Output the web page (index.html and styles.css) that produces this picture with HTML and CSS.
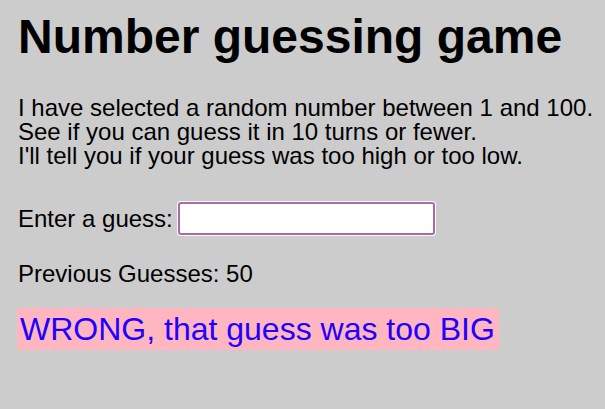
FILE: index.html
```html
<!DOCTYPE html>
<html lang="en">
<head>
<meta charset="utf-8">
<title>Number guessing game</title>
<link rel="stylesheet" href="styles.css">
</head>
<body>
<h1 class="title">Number guessing game</h1>
<p class="intro">I have selected a random number between 1 and 100.<br>See if you can guess it in 10 turns or fewer.<br>I'll tell you if your guess was too high or too low.</p>
<div class="form-row">
  <label class="label" for="guessField">Enter a guess:</label>
  <input class="guess-field" type="text" id="guessField">
</div>
<p class="guesses">Previous Guesses: 50</p>
<p class="last-result">WRONG, that guess was too BIG</p>
</body>
</html>
```
FILE: styles.css
```css
html {
  background: #cccccc;
}
body {
  margin: 0;
  padding: 9px 0 0 18px;
  font-family: "Liberation Sans", Arial, Helvetica, sans-serif;
  font-size: 24px;
  line-height: 24px;
  color: #000;
}
.title {
  margin: 0;
  font-size: 48px;
  line-height: 55px;
  font-weight: bold;
}
.intro {
  margin: 32px 0 0;
  white-space: nowrap;
}
.form-row {
  margin-top: 34px;
  display: flex;
  align-items: center;
}
.label {
  font-size: 24px;
}
.guess-field {
  margin: 0 0 0 5px;
  box-sizing: border-box;
  width: 257px;
  height: 33px;
  border: 2px solid #a96aa7;
  border-radius: 3px;
  box-shadow: 0 0 0 1px #ffffff;
  background: #ffffff;
  padding: 0 4px;
  font-size: 20px;
  font-family: inherit;
  outline: none;
}
.guesses {
  margin: 27px 0 0;
}
.last-result {
  display: inline-block;
  margin: 22px 0 0 -1px;
  padding: 3px 4px 3px 3px;
  font-size: 32px;
  line-height: 36px;
  background: #ffb6c1;
  color: #2200ff;
}
```
